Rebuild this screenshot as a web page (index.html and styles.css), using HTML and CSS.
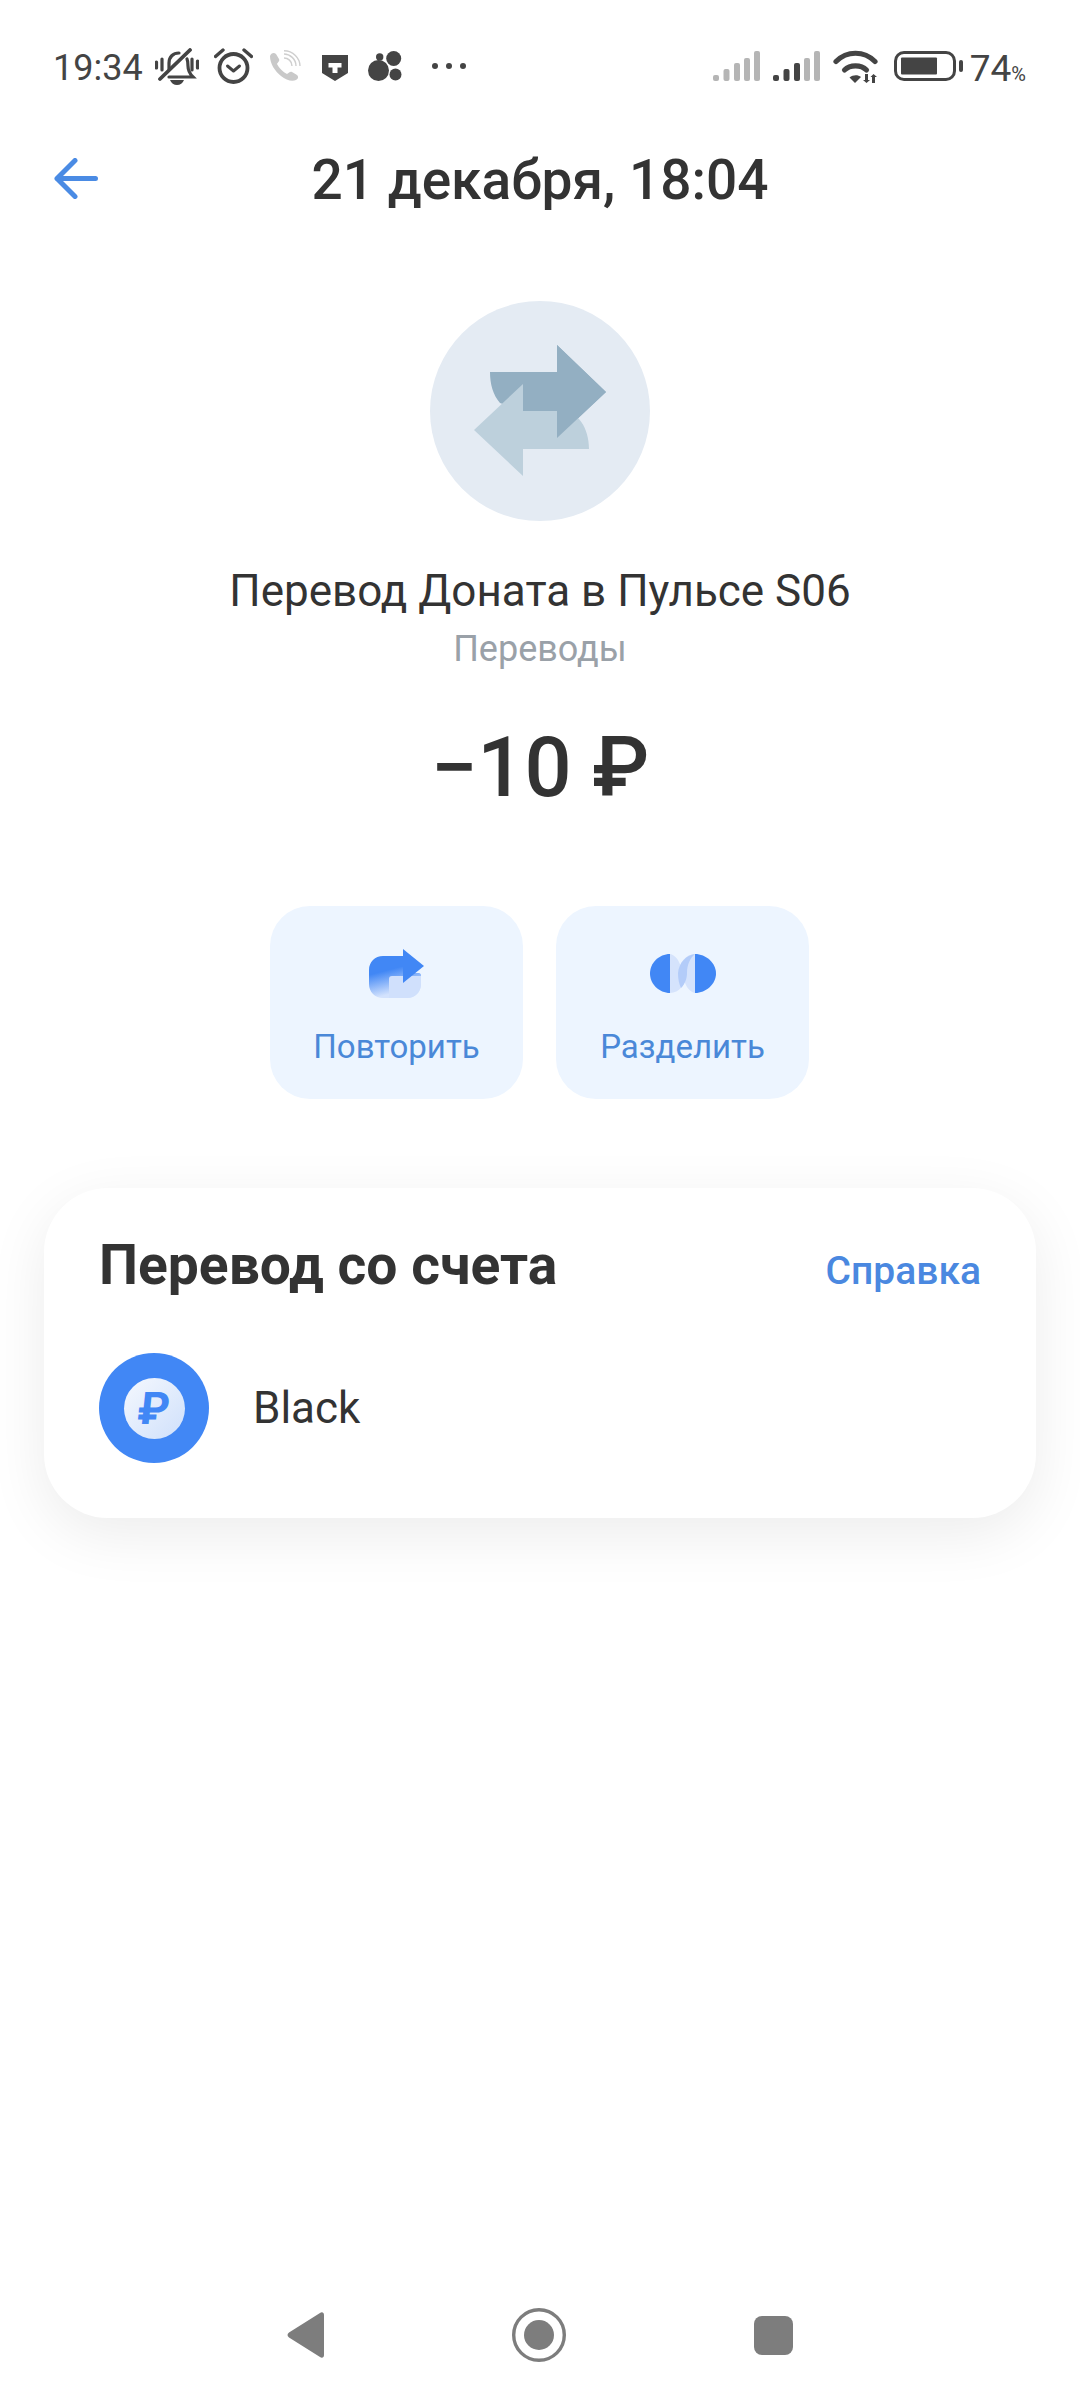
FILE: index.html
```html
<!DOCTYPE html>
<html lang="ru">
<head>
<meta charset="utf-8">
<title>Операция</title>
<link rel="stylesheet" href="styles.css">
</head>
<body>
<div class="screen">
  <div class="status">
    <div class="status-left">
      <span class="clock">19:34</span>
      <svg class="ic-bell" width="44" height="37" viewBox="0 0 44 37"><g fill="none" stroke="#444" stroke-width="3.200" stroke-linecap="round"><path d="M14 21V15C14 9 18 5 24 5"/><path d="M32 11C33 13 33 15 33 18 33 23 35 26 38 29H14"/><path d="M7 11V22M1.500 14V20M37 11V22M42.500 13V20"/><path d="M5 31 35 2" stroke-width="3.800"/></g><path d="M15 32H29C28 35 25 37 22 37S16 35 15 32Z" fill="#444"/></svg>
      <svg class="ic-alarm" width="39" height="36" viewBox="0 0 39 36"><g fill="none" stroke="#444" stroke-linecap="round" stroke-linejoin="round"><circle cx="19.500" cy="20" r="14" stroke-width="3.800"/><path d="m13.500 18 6 5 6-5" stroke-width="3"/><path d="M1.500 8.500 9 2M37.500 8.500 30 2" stroke-width="3.400"/></g></svg>
      <svg class="ic-phone" width="34" height="32" viewBox="0 0 34 32"><path d="M2 6C3 3 6 2 8 4L11 9C12 11 10 12 9 14 11 18 15 22 19 24 21 23 22 21 24 22L29 25C31 27 30 29 28 30 24 32 18 30 13 26 7 21 2 14 2 6Z" fill="#c9c9c9"/><g fill="none" stroke="#cfcfcf" stroke-width="1.400"><path d="M16 8C20 8 24 11 24 16"/><path d="M16 4C22 4 28 9 28 16"/><path d="M16 .8C25 .8 32 8 32 16"/></g></svg>
      <svg class="ic-shield" width="26" height="26" viewBox="0 0 26 26"><path d="M0 0H26V18L13 26 0 18Z" fill="#444"/><path d="M6.500 8H19.500V12.500H15.500V18H10.500V12.500H6.500Z" fill="#fff"/></svg>
      <svg class="ic-cluster" width="34" height="30" viewBox="0 0 34 30"><g fill="#444"><circle cx="10.500" cy="19.500" r="10.500"/><circle cx="25.700" cy="7.500" r="7.500"/><circle cx="27.500" cy="23.500" r="6"/><circle cx="11.700" cy="6" r="3.700"/></g></svg>
      <svg class="ic-more" width="34" height="6" viewBox="0 0 34 6"><g fill="#444"><circle cx="3" cy="3" r="3"/><circle cx="17" cy="3" r="3"/><circle cx="31" cy="3" r="3"/></g></svg>
    </div>
    <div class="status-right">
      <svg width="47" height="30" viewBox="0 0 47 30"><g fill="#b5b5b5"><rect x="0" y="24" width="6" height="6" rx="2"/><rect x="10.500" y="18" width="6" height="12" rx="2"/><rect x="21" y="12" width="6" height="18" rx="2"/><rect x="31" y="7" width="6" height="23" rx="2"/><rect x="41" y="0" width="6" height="30" rx="2"/></g></svg>
      <svg class="ic-signal2" width="47" height="30" viewBox="0 0 47 30"><g fill="#444"><rect x="0" y="24" width="6" height="6" rx="2"/><rect x="10.500" y="18" width="6" height="12" rx="2"/><rect x="21" y="12" width="6" height="18" rx="2"/></g><g fill="#b5b5b5"><rect x="31" y="7" width="6" height="23" rx="2"/><rect x="41" y="0" width="6" height="30" rx="2"/></g></svg>
      <svg class="ic-wifi" width="45" height="33" viewBox="0 0 45 33"><g fill="none" stroke="#444" stroke-width="5.200" stroke-linecap="round"><path d="M3 11.500C14 .5 31 .5 42 11.500"/><path d="M11.500 20C17 14.500 28 14.500 33.500 20"/></g><path d="M16.500 27.500C20 24.500 25 24.500 28 27L22 33Z" fill="#444"/><path d="M32 24H35V30H37L33.500 33 30 30H32Z" fill="#444"/><path d="M39 33H42V27H44L40.500 24 37.500 27H39Z" fill="#444"/></svg>
      <svg class="ic-batt" width="69" height="30" viewBox="0 0 69 30"><rect x="1.500" y="1.500" width="59" height="27" rx="8.500" fill="none" stroke="#444" stroke-width="3"/><rect x="7" y="6.500" width="36" height="17" rx="1" fill="#444"/><rect x="65" y="9" width="4" height="12" rx="2" fill="#444"/></svg>
      <span class="batt-text">74<span class="pct">%</span></span>
    </div>
  </div>

  <header class="topbar">
    <svg class="back" width="44" height="41" viewBox="0 0 44 41"><path d="M41.500 20.500H3M21 2.500 3 20.500 21 38.500" fill="none" stroke="#4a8be4" stroke-width="5" stroke-linecap="round" stroke-linejoin="round"/></svg>
    <h1 class="title">21 декабря, 18:04</h1>
  </header>

  <section class="hero">
    <div class="avatar">
      <svg width="220" height="220" viewBox="0 0 220 220"><path d="M60 71H127V44L176 91 127 137V110H93L70 102C63 94 60 83 60 71Z" fill="#93afc2"/><path d="M44 129 93 83V110H132C148 110 159 127 159 148H93V175Z" fill="#bdd0dc"/><path d="M127 44 176 91 127 137Z" fill="#93afc2"/></svg>
    </div>
    <div class="name">Перевод Доната в Пульсе S06</div>
    <div class="category">Переводы</div>
    <div class="amount">−10 ₽</div>
  </section>

  <div class="actions">
    <button class="action">
      <span class="action-icon">
        <svg width="55" height="49" viewBox="0 0 55 49"><defs><linearGradient id="repeat-fade" gradientUnits="userSpaceOnUse" x1="0" y1="26" x2="6" y2="49"><stop offset="0" stop-color="#4187f5"/><stop offset="1" stop-color="#d3e2fd"/></linearGradient></defs><path d="M14 7H34V24H50C51 24 52 25 52 26V35C52 43 46 49 38 49H14C6 49 0 43 0 35V21C0 13 6 7 14 7Z" fill="url(#repeat-fade)"/><path d="M23 27H52V35C52 43 46 49 38 49H20V30C20 28 21 27 23 27Z" fill="#d0e0fc"/><path d="M34 0 55 17 34 34Z" fill="#4187f5"/></svg>
      </span>
      <span class="action-label">Повторить</span>
    </button>
    <button class="action">
      <span class="action-icon">
        <svg width="66" height="39" viewBox="0 0 66 39"><path d="M20 0C25 1 29 6 31 13L37 20C36 30 29 39 20 39Z" fill="#d5e3fc"/><path d="M45 39C40 38 36 33 34 26L28 19C29 9 36 0 45 0Z" fill="#d5e3fc"/><path d="M45 0C36 1 29 9 28 19 28 25 29 30 31 34 35 30 37 24 37 19 37 11 40 4 45 0Z" fill="#b3ccf9"/><path d="M20 0C9 0 0 9 0 19.500S9 39 20 39Z" fill="#4187f5"/><path d="M45 0C56 0 66 9 66 19.500S56 39 45 39Z" fill="#4187f5"/></svg>
      </span>
      <span class="action-label">Разделить</span>
    </button>
  </div>

  <section class="card">
    <div class="card-head">
      <h2 class="card-title">Перевод со счета</h2>
      <a class="help">Справка</a>
    </div>
    <div class="account">
      <div class="acc-icon"><div class="acc-inner"><span class="acc-glyph">₽</span></div></div>
      <span class="acc-name">Black</span>
    </div>
  </section>

  <nav class="navbar">
    <svg width="37" height="46" viewBox="0 0 37 46"><path d="M37 3V43C37 45.500 35 46.500 33 45L2 25.500C0 24 0 22 2 20.500L33 1C35 -.5 37 .5 37 3Z" fill="#7d7d7d"/></svg>
    <svg width="54" height="54" viewBox="0 0 54 54"><circle cx="27" cy="27" r="25.300" fill="none" stroke="#7d7d7d" stroke-width="3.400"/><circle cx="27" cy="27" r="15" fill="#7d7d7d"/></svg>
    <div class="nav-square"></div>
  </nav>
</div>
</body>
</html>
```
FILE: styles.css
```css
* { box-sizing: border-box; }
html, body { margin: 0; padding: 0; background: #fff; }
body { font-family: Roboto, "Liberation Sans", sans-serif; color: #333; }
.screen { width: 1080px; height: 2400px; display: flex; flex-direction: column; position: relative; overflow: hidden; }

/* status bar */
.status { height: 44px; margin-top: 44px; padding: 0 54px 0 53px; display: flex; justify-content: space-between; align-items: center; }
.status-left, .status-right { display: flex; align-items: center; }
.clock { font-size: 36px; color: #444; width: 102px; margin-top: 4px; }
.ic-alarm { margin-left: 15px; }
.ic-phone { margin-left: 15px; }
.ic-shield { margin-left: 20px; margin-top: 4px; }
.ic-cluster { margin-left: 20px; }
.ic-more { margin-left: 30px; }
.ic-signal2 { margin-left: 13px; }
.ic-wifi { margin-left: 13px; }
.ic-batt { margin-left: 16px; }
.batt-text { font-size: 37px; color: #444; margin-left: 7px; margin-top: 4px; }
.pct { font-size: 20px; }

/* title row */
.topbar { height: 64px; margin-top: 60px; display: flex; align-items: center; justify-content: center; position: relative; }
.back { position: absolute; left: 54px; top: 10px; }
.title { margin: 0; font-size: 55px; line-height: 64px; font-weight: 500; color: #333; }

/* operation summary */
.hero { display: flex; flex-direction: column; align-items: center; margin-top: 89px; }
.avatar { width: 220px; height: 220px; border-radius: 50%; background: #e4ebf3; }
.avatar svg { display: block; }
.name { font-size: 44px; margin-top: 44px; line-height: 52px; color: #333; }
.category { font-size: 36px; margin-top: 12px; line-height: 40px; color: #9aa1a8; }
.amount { font-size: 83px; font-weight: 500; margin-top: 51px; line-height: 96px; color: #333; }

/* quick actions */
.actions { display: flex; justify-content: center; gap: 33px; margin-top: 90px; padding-right: 1px; }
.action { width: 253px; height: 193px; border: 0; border-radius: 40px; background: #edf5ff; display: flex; flex-direction: column; align-items: center; padding: 42px 0 0; font-family: inherit; }
.action-icon { height: 50px; display: flex; align-items: center; justify-content: center; }
.action-icon svg { display: block; }
.action-label { font-size: 33px; line-height: 38px; color: #4a88d8; margin-top: 30px; }

/* source account card */
.card { width: 992px; height: 330px; margin: 89px 0 0 44px; background: #fff; border-radius: 64px; box-shadow: 0 16px 60px rgba(0,0,0,.08); padding: 45px 55px 0 55px; }
.card-head { display: flex; justify-content: space-between; align-items: baseline; }
.card-title { margin: 0; font-size: 55.2px; line-height: 64px; font-weight: 700; color: #333; }
.help { font-size: 39px; font-weight: 500; color: #4a88e0; }
.account { display: flex; align-items: center; margin-top: 56px; }
.acc-icon { width: 110px; height: 110px; border-radius: 50%; background: #4187f5; display: flex; align-items: center; justify-content: center; }
.acc-inner { width: 61px; height: 61px; border-radius: 50%; background: linear-gradient(135deg, #f5f8fe, #cfe0fb); color: #4187f5; display: flex; align-items: center; justify-content: center; }
.acc-glyph { font-size: 45px; font-weight: 700; line-height: 1; transform: skewX(-6deg); }
.acc-name { font-size: 44px; margin-left: 44px; color: #333; }

/* system navigation */
.navbar { position: absolute; left: 287px; top: 2308px; width: 506px; height: 54px; display: flex; justify-content: space-between; align-items: center; }
.nav-square { width: 39px; height: 39px; border-radius: 8px; background: #7d7d7d; }
```
